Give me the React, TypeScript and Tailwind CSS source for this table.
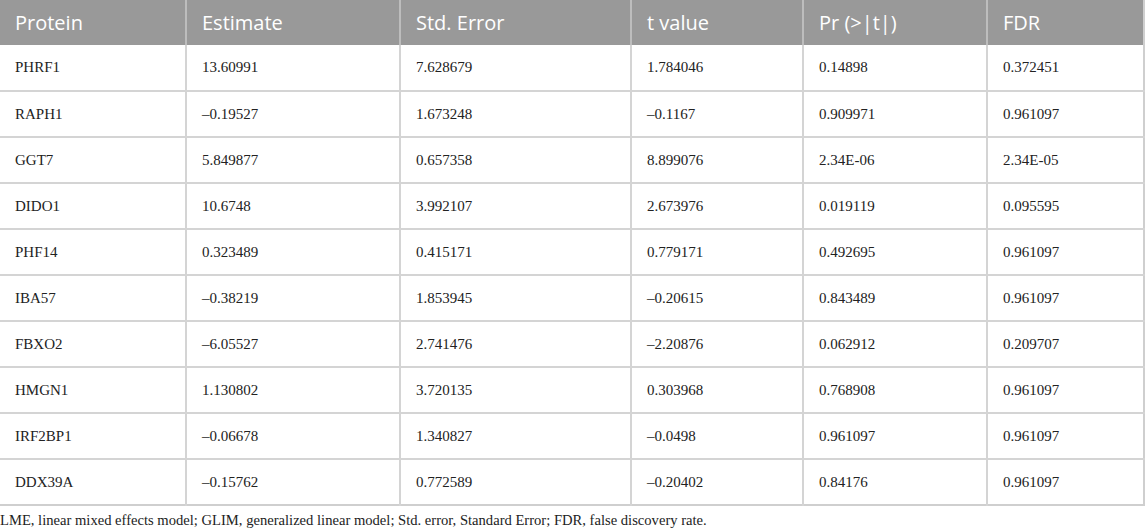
const columns = ['Protein', 'Estimate', 'Std. Error', 't value', 'Pr (>|t|)', 'FDR']
const widths = ['w-[186px]', 'w-[214px]', 'w-[231px]', 'w-[172px]', 'w-[184px]', 'w-[157px]']

const rows = [
  ['PHRF1', '13.60991', '7.628679', '1.784046', '0.14898', '0.372451'],
  ['RAPH1', '–0.19527', '1.673248', '–0.1167', '0.909971', '0.961097'],
  ['GGT7', '5.849877', '0.657358', '8.899076', '2.34E-06', '2.34E-05'],
  ['DIDO1', '10.6748', '3.992107', '2.673976', '0.019119', '0.095595'],
  ['PHF14', '0.323489', '0.415171', '0.779171', '0.492695', '0.961097'],
  ['IBA57', '–0.38219', '1.853945', '–0.20615', '0.843489', '0.961097'],
  ['FBXO2', '–6.05527', '2.741476', '–2.20876', '0.062912', '0.209707'],
  ['HMGN1', '1.130802', '3.720135', '0.303968', '0.768908', '0.961097'],
  ['IRF2BP1', '–0.06678', '1.340827', '–0.0498', '0.961097', '0.961097'],
  ['DDX39A', '–0.15762', '0.772589', '–0.20402', '0.84176', '0.961097'],
]

export default function App() {
  return (
    <div className="w-[1145px] bg-white">
      <table className="w-[1144px] table-fixed border-collapse border-r-2 border-b-2 border-[#cfcfcf]">
        <thead>
          <tr className="h-[45px] bg-[#999999]">
            {columns.map((c, i) => (
              <th
                key={c}
                className={`${widths[i]} px-[15px] text-left align-middle text-[20px] font-normal text-white ${i > 0 ? 'border-l-2 border-[#bdbdbd]' : ''}`}
                style={{ fontFamily: '"Open Sans", sans-serif' }}
              >
                {c}
              </th>
            ))}
          </tr>
        </thead>
        <tbody>
          {rows.map((r, ri) => (
            <tr key={r[0]} className={`h-[46px] ${ri > 0 ? 'border-t-2 border-[#d4d4d4]' : ''}`}>
              {r.map((v, i) => (
                <td
                  key={i}
                  className={`px-[15px] align-middle text-[15px] text-[#222] ${i > 0 ? 'border-l-2 border-[#d4d4d4]' : ''}`}
                  style={{ fontFamily: '"Liberation Serif", serif' }}
                >
                  {v}
                </td>
              ))}
            </tr>
          ))}
        </tbody>
      </table>
      <p className="mt-[4px] text-[14.6px] text-[#222]" style={{ fontFamily: '"Liberation Serif", serif' }}>
        LME, linear mixed effects model; GLIM, generalized linear model; Std. error, Standard Error; FDR, false discovery rate.
      </p>
    </div>
  )
}
